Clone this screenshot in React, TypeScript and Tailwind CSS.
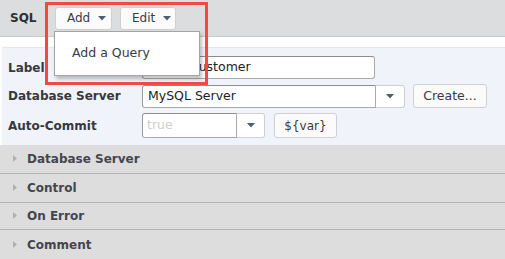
import React from 'react';

function Caret() {
  return (
    <svg width="8" height="5" viewBox="0 0 8 5" className="shrink-0">
      <path d="M0 0 L8 0 L4 4.5 Z" fill="#4a5f70" />
    </svg>
  );
}

function Section({ title, tall }: { title: string; tall?: boolean }) {
  return (
    <div
      className={`flex items-center border-b border-[#b4b4b4] last:border-b-0 ${
        tall ? 'h-[29px]' : 'h-[28px]'
      }`}
    >
      <svg width="4" height="7" viewBox="0 0 4 7" className="ml-[13px] mr-[10px]">
        <path d="M0 0 L4 3.5 L0 7 Z" fill="#b0b0b0" />
      </svg>
      <span className="text-[12px] font-bold text-[#45454f]">{title}</span>
    </div>
  );
}

export default function App() {
  return (
    <div className="relative w-[505px] h-[259px] overflow-hidden bg-white font-['DejaVu_Sans',sans-serif] text-[#333]">
      {/* Toolbar */}
      <div className="flex items-center h-[37px] bg-[#dcdddf] border-b border-[#c9cacc]">
        <span className="ml-[10px] w-[45px] text-[12px] font-bold text-[#2e2e33]">SQL</span>
        <button className="flex items-center gap-[8px] h-[23px] w-[57px] pl-[11px] rounded-[3px] border border-[#d0d0d0] bg-[#fbfbfb] text-[12px] text-[#3a3a44]">
          Add <Caret />
        </button>
        <button className="ml-[8px] flex items-center gap-[8px] h-[23px] w-[56px] pl-[11px] rounded-[3px] border border-[#d0d0d0] bg-[#fbfbfb] text-[12px] text-[#3a3a44]">
          Edit <Caret />
        </button>
      </div>

      <div className="h-[10px]" />

      {/* Form panel */}
      <div className="ml-[2px] h-[98px] bg-[#f0f4fa] border-t border-[#e3e7ed] pt-[8px] flex flex-col">
        <div className="flex items-center h-[23px]">
          <span className="w-[140px] pl-[6px] text-[12px] font-bold text-[#38383f]">Label</span>
          <div className="flex items-center w-[233px] h-[23px] px-[5px] bg-white rounded-[3px] border border-[#aaa] border-t-[#8d8d8d] border-l-[#999] text-[12.5px] text-[#222]">
            Query Customer
          </div>
        </div>
        <div className="flex items-center h-[24px] mt-[5px]">
          <span className="w-[140px] pl-[6px] text-[12px] font-bold text-[#38383f]">Database Server</span>
          <div className="flex items-center w-[234px] h-[23px] px-[5px] bg-white rounded-l-[3px] border border-[#aaa] border-t-[#8d8d8d] border-l-[#999] text-[12.5px] text-[#222]">
            MySQL Server
          </div>
          <div className="flex items-center justify-center w-[29px] h-[23px] bg-white rounded-r-[3px] border border-l-0 border-[#d0d0d0]">
            <Caret />
          </div>
          <button className="ml-[8px] h-[24px] w-[74px] rounded-[3px] border border-[#d0d0d0] bg-[#fbfbfb] text-[12.5px] text-[#3a3a44]">
            Create...
          </button>
        </div>
        <div className="flex items-center h-[25px] mt-[5px]">
          <span className="w-[140px] pl-[6px] text-[12px] font-bold text-[#38383f]">Auto-Commit</span>
          <div className="flex items-center w-[95px] h-[25px] px-[4px] bg-white rounded-l-[3px] border border-[#aaa] border-t-[#8d8d8d] border-l-[#999] text-[12.5px] text-[#cfcfcf]">
            true
          </div>
          <div className="flex items-center justify-center w-[28px] h-[25px] bg-white rounded-r-[3px] border border-l-0 border-[#d0d0d0]">
            <Caret />
          </div>
          <button className="ml-[9px] h-[25px] w-[63px] rounded-[3px] border border-[#d0d0d0] bg-[#fbfbfb] text-[12px] text-[#3a3a44]">
            {'${var}'}
          </button>
        </div>
      </div>

      {/* Collapsed sections */}
      <div className="bg-[#dddddd] flex flex-col h-[114px]">
        <Section title="Database Server" tall />
        <Section title="Control" tall />
        <Section title="On Error" />
        <Section title="Comment" tall />
      </div>

      {/* Dropdown menu */}
      <div className="absolute left-[54px] top-[31px] w-[146px] h-[45px] bg-white border border-[#a5a5a5] shadow-[2px_3px_4px_rgba(0,0,0,0.25)] flex items-center">
        <span className="ml-[17px] text-[12.5px] text-[#3a3a44]">Add a Query</span>
      </div>

      {/* Highlight annotation */}
      <div className="absolute left-[45px] top-[2px] w-[163px] h-[83px] border-[3px] border-[#f24848] pointer-events-none" />
    </div>
  );
}
